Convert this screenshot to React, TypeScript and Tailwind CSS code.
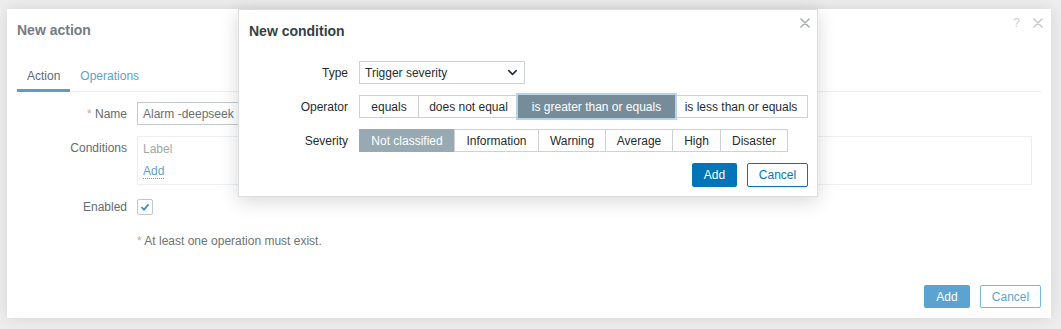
import React from "react";
import { ChevronDown } from "lucide-react";

const font = { fontFamily: '"Liberation Sans", Arial, sans-serif' };

function CloseIcon({ color }: { color: string }) {
  return (
    <svg width="10" height="10" viewBox="0 0 10 10" className="block">
      <path d="M1 1 L9 9 M9 1 L1 9" stroke={color} strokeWidth="1.6" strokeLinecap="round" />
    </svg>
  );
}

const operators = [
  { label: "equals", w: "w-[60px]" },
  { label: "does not equal", w: "w-[101px]" },
  { label: "is greater than or equals", w: "w-[157px]", on: true },
  { label: "is less than or equals", w: "w-[134px]" },
];

const severities = [
  { label: "Not classified", w: "w-[96px]", on: true },
  { label: "Information", w: "w-[85px]" },
  { label: "Warning", w: "w-[68px]" },
  { label: "Average", w: "w-[68px]" },
  { label: "High", w: "w-[49px]" },
  { label: "Disaster", w: "w-[68px]" },
];

export default function App() {
  return (
    <div
      className="relative w-[1061px] h-[329px] overflow-hidden bg-[#ededed] pt-[9px] pl-[7px] text-[12px] leading-[14px]"
      style={font}
    >
      {/* Diálogo de fondo: New action */}
      <div className="w-[1044px] h-[309px] bg-white flex flex-col px-[10px] pb-[10px] shadow-[0_0_14px_rgba(0,0,0,0.10)]">
        <div className="h-[42px] flex justify-between">
          <div className="self-center text-[14px] leading-[16px] font-bold text-[#757c81]">New action</div>
          <div className="flex items-center gap-[13px] mt-[9px] -mr-[2px] self-start h-[10px]">
            <span className="text-[12px] leading-[10px] text-[#cbcdcf]">?</span>
            <CloseIcon color="#c6c9cb" />
          </div>
        </div>

        {/* Tabs */}
        <div className="mt-[10px] flex h-[31px] border-b border-[#eceff1]">
          <div className="h-[31px] -mb-px px-[10px] pt-[8px] border-b-[3px] border-[#5e9ec6] text-[#62686c]">Action</div>
          <div className="h-[31px] px-[10px] pt-[8px] text-[#61a0cc]">Operations</div>
        </div>

        {/* Form */}
        <div className="flex flex-col">
          <div className="mt-[10px] flex items-center gap-[10px] h-[23px]">
            <div className="w-[110px] text-right text-[#666b6e]">
              <span className="text-[#e79a9a]">* </span>Name
            </div>
            <div className="w-[453px] h-[23px] border border-[#c3c8cb] pl-[5px] flex items-center text-[#6a6f72]">
              Alarm -deepseek
            </div>
          </div>

          <div className="mt-[11px] flex gap-[10px]">
            <div className="w-[110px] text-right text-[#666b6e] pt-[5px]">Conditions</div>
            <div className="w-[895px] h-[49px] border border-[#eceff1] px-[5px] pt-[5px] flex flex-col gap-[8px]">
              <div className="text-[#a3a7aa]">Label</div>
              <div>
                <span className="text-[#5e9fcc] border-b border-dotted border-[#5e9fcc] leading-[13px] inline-block">Add</span>
              </div>
            </div>
          </div>

          <div className="mt-[10px] flex items-center gap-[10px] h-[24px]">
            <div className="w-[110px] text-right text-[#666b6e]">Enabled</div>
            <div className="w-[16px] h-[16px] border border-[#bcc6cc] rounded-[2px] flex items-center justify-center">
              <svg width="12" height="12" viewBox="0 0 12 12">
                <path d="M2.5 6.2 L5 8.6 L9.6 3.4" fill="none" stroke="#3d8fc8" strokeWidth="1.8" />
              </svg>
            </div>
          </div>

          <div className="mt-[10px] flex items-center gap-[10px] h-[24px]">
            <div className="w-[110px]" />
            <div className="text-[#6e7376]">
              <span className="text-[#e79a9a]">*</span> At least one operation must exist.
            </div>
          </div>
        </div>

        <div className="mt-auto flex justify-end gap-[10px]">
          <button className="w-[46px] h-[23px] bg-[#5ba4d2] rounded-[2px] text-white">Add</button>
          <button className="w-[61px] h-[23px] border border-[#7ab5dc] rounded-[2px] text-[#5ea3cf] bg-white">Cancel</button>
        </div>
      </div>

      {/* Diálogo superior: New condition */}
      <div className="absolute left-[238px] top-[9px] w-[580px] h-[188px] bg-white border border-[#dcdfe1] px-[9px] pb-[9px] flex flex-col shadow-[0_4px_18px_rgba(0,0,0,0.16)] text-[#1f2c33]">
        <div className="h-[41px] flex justify-between">
          <div className="self-center text-[14px] leading-[16px] font-bold text-[#353f45] pl-[1px] pt-[1px]">New condition</div>
          <div className="mt-[8px] -mr-[2px] h-[10px]">
            <CloseIcon color="#a8adb0" />
          </div>
        </div>

        <div className="mt-[10px] flex flex-col gap-[11px]">
          <div className="flex items-center gap-[11px] h-[23px]">
            <div className="w-[100px] text-right">Type</div>
            <div className="w-[166px] h-[23px] border border-[#cdd1d4] flex items-center justify-between pl-[5px] pr-[4px]">
              <span>Trigger severity</span>
              <ChevronDown size={15} strokeWidth={2.4} color="#1f2c33" />
            </div>
          </div>

          <div className="flex items-center gap-[11px] h-[23px]">
            <div className="w-[100px] text-right">Operator</div>
            <div className="flex">
              {operators.map((o, i) => (
                <div
                  key={o.label}
                  className={
                    "h-[23px] flex items-center justify-center border " +
                    o.w +
                    (i > 0 ? " -ml-px" : "") +
                    (o.on
                      ? " relative bg-[#768d99] border-[#768d99] text-white shadow-[0_0_0_2px_#b6d3ea]"
                      : " bg-white border-[#cdd1d4]")
                  }
                >
                  {o.label}
                </div>
              ))}
            </div>
          </div>

          <div className="flex items-center gap-[11px] h-[23px]">
            <div className="w-[100px] text-right">Severity</div>
            <div className="flex">
              {severities.map((s, i) => (
                <div
                  key={s.label}
                  className={
                    "h-[23px] flex items-center justify-center border " +
                    s.w +
                    (i > 0 ? " -ml-px" : "") +
                    (s.on ? " bg-[#97aab3] border-[#97aab3] text-white" : " bg-white border-[#cdd1d4]")
                  }
                >
                  {s.label}
                </div>
              ))}
            </div>
          </div>

          <div className="flex justify-end gap-[10px]">
            <button className="w-[45px] h-[24px] bg-[#0275b8] rounded-[2px] text-white">Add</button>
            <button className="w-[61px] h-[24px] border border-[#0275b8] rounded-[2px] text-[#0275b8] bg-white">Cancel</button>
          </div>
        </div>
      </div>
    </div>
  );
}
